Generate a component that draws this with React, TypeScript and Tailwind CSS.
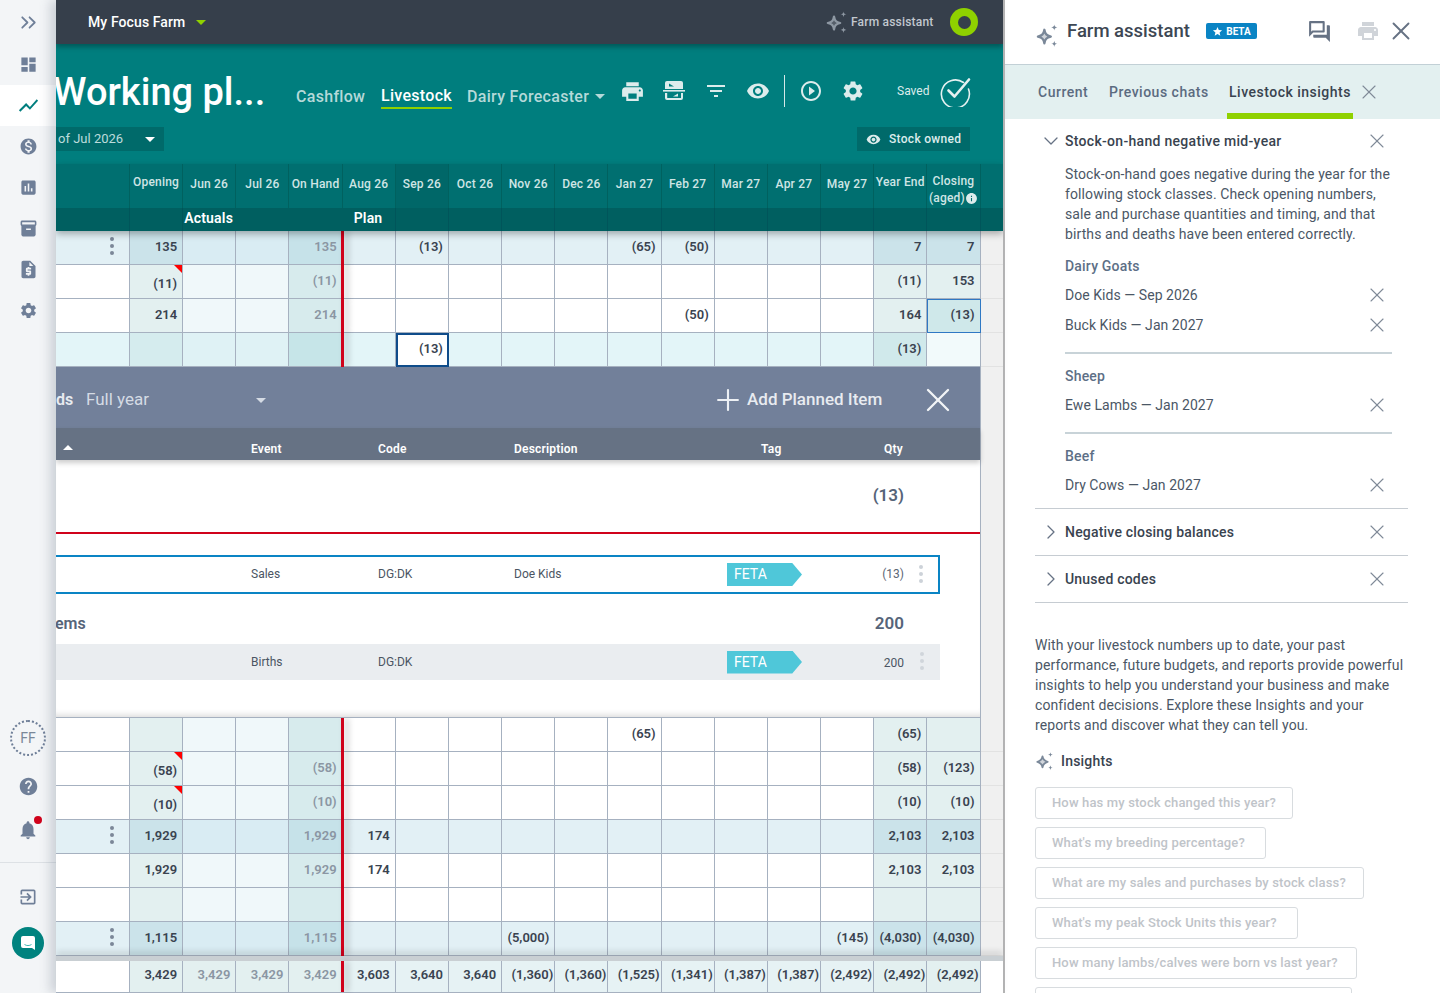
import { ReactNode } from 'react';
import { ChevronDown, ChevronRight, ChevronsRight, Plus, X } from 'lucide-react';
import {
  MdAssessment,
  MdDashboard,
  MdFilterList,
  MdHelp,
  MdInfo,
  MdInventory2,
  MdMonetizationOn,
  MdNotifications,
  MdOutlineExitToApp,
  MdOutlineQuestionAnswer,
  MdPlayCircleOutline,
  MdPrint,
  MdRequestQuote,
  MdSettings,
  MdShowChart,
  MdStar,
  MdVisibility,
} from 'react-icons/md';

type RowKind = 'plain' | 'total' | 'edit';

interface RowData {
  kind: RowKind;
  menu?: boolean;
  corner?: boolean;
  cells: Record<number, string>;
}

const gridCols = 'grid grid-cols-[74px_repeat(16,53.16px)]';

const months = ['Jun 26', 'Jul 26', 'On Hand', 'Aug 26', 'Sep 26', 'Oct 26', 'Nov 26', 'Dec 26', 'Jan 27', 'Feb 27', 'Mar 27', 'Apr 27', 'May 27'];

const topRows: RowData[] = [
  { kind: 'total', menu: true, cells: { 0: '135', 3: '135', 5: '(13)', 9: '(65)', 10: '(50)', 14: '7', 15: '7' } },
  { kind: 'plain', corner: true, cells: { 0: '(11)', 3: '(11)', 14: '(11)', 15: '153' } },
  { kind: 'plain', cells: { 0: '214', 3: '214', 10: '(50)', 14: '164', 15: '(13)' } },
  { kind: 'edit', cells: { 5: '(13)', 14: '(13)' } },
];

const bottomRows: RowData[] = [
  { kind: 'plain', cells: { 9: '(65)', 14: '(65)' } },
  { kind: 'plain', corner: true, cells: { 0: '(58)', 3: '(58)', 14: '(58)', 15: '(123)' } },
  { kind: 'plain', corner: true, cells: { 0: '(10)', 3: '(10)', 14: '(10)', 15: '(10)' } },
  { kind: 'total', menu: true, cells: { 0: '1,929', 3: '1,929', 4: '174', 14: '2,103', 15: '2,103' } },
  { kind: 'plain', cells: { 0: '1,929', 3: '1,929', 4: '174', 14: '2,103', 15: '2,103' } },
  { kind: 'plain', cells: {} },
  { kind: 'total', menu: true, cells: { 0: '1,115', 3: '1,115', 7: '(5,000)', 13: '(145)', 14: '(4,030)', 15: '(4,030)' } },
];

const footerValues = ['3,429', '3,429', '3,429', '3,429', '3,603', '3,640', '3,640', '(1,360)', '(1,360)', '(1,525)', '(1,341)', '(1,387)', '(1,387)', '(2,492)', '(2,492)', '(2,492)'];

const insightQuestions = [
  { text: 'How has my stock changed this year?', width: 'w-[258px]' },
  { text: "What's my breeding percentage?", width: 'w-[231px]' },
  { text: 'What are my sales and purchases by stock class?', width: 'w-[329px]' },
  { text: "What's my peak Stock Units this year?", width: 'w-[263px]' },
  { text: 'How many lambs/calves were born vs last year?', width: 'w-[322px]' },
];

const tints: Record<RowKind, string[]> = {
  plain: ['bg-[#e3f0f0]', 'bg-[#f0f8fa]', 'bg-[#d7ebed]', 'bg-white', 'bg-[#e3f0f0]'],
  total: ['bg-[#cbe3ea]', 'bg-[#d9ecf3]', 'bg-[#c6e2e9]', 'bg-[#e2f0f5]', 'bg-[#cbe3ea]'],
  edit: ['bg-[#d5ecee]', 'bg-[#dff2f5]', 'bg-[#c6e5e8]', 'bg-[#e3f5f8]', 'bg-[#d0e9eb]'],
};

function tintIndex(col: number) {
  if (col === 0) return 0;
  if (col < 3) return 1;
  if (col === 3) return 2;
  if (col < 14) return 3;
  return 4;
}

function Sparkle({ className }: { className: string }) {
  return (
    <svg viewBox="0 0 24 24" className={className} fill="none">
      <path d="M9 6.5C9.7 10.6 11 12 15.2 13C11 14 9.7 15.4 9 19.5C8.3 15.4 7 14 2.8 13C7 12 8.3 10.6 9 6.5Z" fill="currentColor" fillOpacity="0.35" stroke="currentColor" strokeWidth="2.2" strokeLinejoin="round" />
      <path d="M18.5 1.5C18.8 3.4 19.3 3.9 21.5 4.3C19.3 4.7 18.8 5.2 18.5 7.2C18.2 5.2 17.7 4.7 15.5 4.3C17.7 3.9 18.2 3.4 18.5 1.5Z" fill="currentColor" />
      <path d="M18.5 17C18.8 19 19.3 19.5 21.5 19.9C19.3 20.3 18.8 20.8 18.5 23C18.2 20.8 17.7 20.3 15.5 19.9C17.7 19.5 18.2 19 18.5 17Z" fill="currentColor" />
    </svg>
  );
}

function Caret({ className }: { className: string }) {
  return <span className={`inline-block h-0 w-0 border-x-[5px] border-t-[5px] border-x-transparent ${className}`} />;
}

function Kebab({ className = 'bg-[#7b8798]' }: { className?: string }) {
  return (
    <span className="flex flex-col gap-[3px]">
      <span className={`h-[4px] w-[4px] rounded-full ${className}`} />
      <span className={`h-[4px] w-[4px] rounded-full ${className}`} />
      <span className={`h-[4px] w-[4px] rounded-full ${className}`} />
    </span>
  );
}

function SideItem({ children, active }: { children: ReactNode; active?: boolean }) {
  return <div className={`flex h-[41px] items-center justify-center text-[#6f7f98] ${active ? 'bg-white' : ''}`}>{children}</div>;
}

function Sidebar() {
  return (
    <aside className="flex h-full w-[56px] shrink-0 flex-col bg-[#f3f5f7]">
      <div className="flex h-[44px] items-center justify-center text-[#6f7f98]">
        <ChevronsRight size={25} strokeWidth={1.7} />
      </div>
      <SideItem><MdDashboard size={19} /></SideItem>
      <SideItem active><MdShowChart size={23} className="text-[#007e7e]" /></SideItem>
      <SideItem><MdMonetizationOn size={19} /></SideItem>
      <SideItem><MdAssessment size={19} /></SideItem>
      <SideItem><MdInventory2 size={19} /></SideItem>
      <SideItem><MdRequestQuote size={21} /></SideItem>
      <SideItem><MdSettings size={19} /></SideItem>
      <div className="mt-auto flex flex-col items-center pb-[34px]">
        <div className="flex h-[36px] w-[36px] items-center justify-center rounded-full border-2 border-dotted border-[#6f7f98] text-[14px] text-[#7a8899]">FF</div>
        <MdHelp size={21} className="mt-[20px] text-[#6f7f98]" />
        <div className="relative mt-[22px] text-[#6f7f98]">
          <MdNotifications size={22} />
          <span className="absolute right-[-3px] top-[-3px] h-[8px] w-[8px] rounded-full bg-[#d0021b]" />
        </div>
        <div className="mt-[21px] h-px w-[56px] bg-[#dde1e5]" />
        <MdOutlineExitToApp size={20} className="mt-[24px] text-[#6f7f98]" />
        <div className="mt-[20px] flex h-[32px] w-[32px] items-center justify-center rounded-full bg-[#00837f]">
          <svg viewBox="0 0 16 16" className="h-[16px] w-[16px]">
            <path d="M3 1h10a2 2 0 0 1 2 2v12l-3-2H3a2 2 0 0 1-2-2V3a2 2 0 0 1 2-2z" fill="#fff" />
            <path d="M4.5 9.5c2 1.4 5 1.4 7 0" stroke="#3fb8b4" strokeWidth="1" fill="none" />
          </svg>
        </div>
      </div>
    </aside>
  );
}

function ToolIcon({ children }: { children: ReactNode }) {
  return <div className="flex w-[42px] items-center justify-center text-[#dcecec]">{children}</div>;
}

function TopHeader() {
  return (
    <>
      <div className="relative z-20 flex h-[44px] shrink-0 items-center bg-[#363f4b] shadow-[0_3px_5px_rgba(0,0,0,0.3)]">
        <span className="ml-[32px] w-[108px] text-[14px] font-medium tracking-[0.1px] text-white">My Focus Farm</span>
        <Caret className="border-t-[#8fd100]" />
        <Sparkle className="ml-auto h-[24px] w-[24px] text-[#8e98a3]" />
        <span className="ml-[2px] w-[83px] whitespace-nowrap text-[12px] font-medium tracking-[0.2px] text-[#c2c8cf]">Farm assistant</span>
        <div className="ml-[16px] mr-[25px] flex h-[28px] w-[28px] items-center justify-center rounded-full bg-[#8fd100]">
          <span className="h-[13px] w-[13px] rounded-full bg-[#363f4b]" />
        </div>
      </div>
      <div className="flex h-[120px] shrink-0 flex-col bg-[#007e7e]">
        <div className="mt-[19px] flex h-[56px] items-center">
          <div className="w-[240px] shrink-0 overflow-hidden">
            <div className="-ml-[3px] mt-[2px] whitespace-nowrap text-[38px] font-medium leading-[48px] text-white">Working pl...</div>
          </div>
          <span className="w-[85px] pt-[11px] text-[16px] font-medium tracking-[0.3px] text-[#b5d9d9]">Cashflow</span>
          <span className="mt-[11px] w-[86px]">
            <span className="inline-block border-b-2 border-[#8fd100] text-[16px] font-medium leading-[22px] tracking-[0.3px] text-white">Livestock</span>
          </span>
          <span className="w-[128px] whitespace-nowrap pt-[11px] text-[16px] font-medium tracking-[0.3px] text-[#b5d9d9]">Dairy Forecaster</span>
          <Caret className="mt-[10px] border-t-[#b5d9d9]" />
          <div className="ml-[6px] flex items-center">
            <ToolIcon><MdPrint size={25} /></ToolIcon>
            <ToolIcon>
              <svg viewBox="0 0 24 24" className="h-[24px] w-[24px]" fill="currentColor">
                <path d="M5 2h14a2 2 0 0 1 2 2v6H3V4a2 2 0 0 1 2-2z" />
                <path d="M7 4.5l5 3-5 0z" fill="#007e7e" />
                <rect x="1" y="11" width="22" height="1.6" />
                <path d="M3 14h2.2v5H19v-5h2v5a2 2 0 0 1-2 2H5a2 2 0 0 1-2-2z" />
                <path d="M16 14.5l-5 3 5 0z" />
              </svg>
            </ToolIcon>
            <ToolIcon><MdFilterList size={24} /></ToolIcon>
            <ToolIcon><MdVisibility size={24} /></ToolIcon>
            <div className="ml-[5px] h-[32px] w-px bg-[#d5e8e8]" />
            <div className="ml-[5px] flex items-center">
              <ToolIcon><MdPlayCircleOutline size={24} /></ToolIcon>
              <ToolIcon><MdSettings size={24} /></ToolIcon>
            </div>
          </div>
          <span className="ml-[23px] w-[42px] text-[12px] text-[#dcecec]">Saved</span>
          <svg viewBox="0 0 32 32" className="h-[32px] w-[32px]" fill="none" stroke="#e5f1f1" strokeLinecap="round" strokeLinejoin="round">
            <path d="M24.5 7.5A14 14 0 1 0 29.5 14" strokeWidth="1.6" />
            <path d="M9.5 15.5l6 6L30 4.5" strokeWidth="2.6" />
          </svg>
        </div>
        <div className="mt-[8px] flex h-[24px] items-center">
          <div className="flex h-full w-[108px] items-center bg-[#006a6a] pl-[2px] text-[13px] text-[#bcdcdc]">
            <span>of Jul 2026</span>
            <Caret className="ml-auto mr-[9px] border-t-white" />
          </div>
          <div className="ml-[693px] flex h-full w-[113px] items-center bg-[#006a6a] pl-[9px] text-[12px] font-medium text-[#dcecec]">
            <MdVisibility size={15} />
            <span className="ml-[8px] tracking-[0.3px]">Stock owned</span>
          </div>
        </div>
      </div>
    </>
  );
}

function TableHead() {
  return (
    <div className="relative z-10 h-[67px] shrink-0 bg-[#006f70] shadow-[0_3px_7px_rgba(0,0,0,0.3)]">
      <div className={`${gridCols} h-[44px] text-[12px] font-medium tracking-[0.2px] text-[#cfe5e5]`}>
        <div className="border-r border-[#00615f]" />
        <div className="border-r border-[#00615f] pt-[9px] text-center leading-[18px]">Opening</div>
        {months.map((m) => (
          <div key={m} className={`flex justify-center whitespace-nowrap border-r border-[#00615f] pt-[12px] leading-[16px] ${m === 'Sep 26' ? 'bg-[#006768]' : ''}`}>
            {m}
          </div>
        ))}
        <div className="whitespace-nowrap border-r border-[#00615f] pt-[9px] text-center leading-[18px]">Year End</div>
        <div className="flex flex-col items-center border-r border-[#00615f] pt-[9px] leading-[17px]">
          <span>Closing</span>
          <span className="flex items-center">(aged)<MdInfo size={13} className="text-[#dcecec]" /></span>
        </div>
      </div>
      <div className={`${gridCols} h-[23px] bg-[#005f60] text-[14px] font-semibold leading-[20px] tracking-[0.2px] text-white`}>
        <div className="border-r border-[#00555a]" />
        <div className="border-r border-[#00555a]" />
        <div className="col-span-3 pl-[1px] text-left">Actuals</div>
        <div className="border-r border-[#00555a] pl-[11px]">Plan</div>
        {Array.from({ length: 11 }).map((_, i) => (
          <div key={i} className="border-r border-[#00555a]" />
        ))}
      </div>
    </div>
  );
}

function DataCell({ col, row, rowIndex, top }: { col: number; row: RowData; rowIndex: number; top: boolean }) {
  const value = row.cells[col];
  const muted = col === 3;
  let bg = tints[row.kind][tintIndex(col)];
  let extra = '';
  // selected cells only exist in the upper block
  if (top && rowIndex === 3 && col === 5) {
    bg = 'bg-white';
    extra = 'outline-2 -outline-offset-2 outline-[#0f4c8a]';
  }
  if (top && rowIndex === 3 && col === 15) bg = 'bg-[#f2fafb]';
  if (top && rowIndex === 2 && col === 15) {
    bg = 'bg-[#cfe8ea]';
    extra = 'outline-1 -outline-offset-1 outline-[#2f78c4]';
  }
  const isOpeningCorner = row.corner && col === 0;
  return (
    <div
      className={`relative flex items-center justify-end whitespace-nowrap border-b border-r border-[#a6b1c0] pr-[5px] text-[13px] font-semibold ${bg} ${extra} ${
        muted ? 'text-[#8b96a3]' : 'text-[#3a4350]'
      } ${isOpeningCorner ? 'pt-[5px]' : 'pb-[2px]'}`}
    >
      {isOpeningCorner && <span className="absolute right-0 top-0 h-0 w-0 border-l-[8px] border-t-[8px] border-l-transparent border-t-[#f00]" />}
      {col === 3 && <span className="absolute bottom-[-1px] right-[-2px] top-0 z-[1] w-[3px] bg-[#d0021b] shadow-[4px_0_6px_rgba(0,0,0,0.25)]" />}
      {value}
    </div>
  );
}

function TableRows({ rows, top }: { rows: RowData[]; top: boolean }) {
  return (
    <>
      {rows.map((row, r) => (
        <div key={r} className="flex h-[34px] shrink-0 bg-[#f0f0f0]">
          <div className={`${gridCols} w-[924.5px]`}>
            <div className={`flex items-center justify-end border-b border-r border-[#a6b1c0] pb-[3px] pr-[15px] ${tints[row.kind][3]}`}>
              {row.menu && <Kebab />}
            </div>
            {Array.from({ length: 16 }).map((_, c) => (
              <DataCell key={c} col={c} row={row} rowIndex={r} top={top} />
            ))}
          </div>
          <div className="flex-1 border-b border-[#e2e2e2]" />
        </div>
      ))}
    </>
  );
}

function FetaTag() {
  return (
    <span className="flex h-[23px] w-[75px] items-center bg-[#4fc7d9] pl-[7px] text-[14px] text-white [clip-path:polygon(0_0,87%_0,100%_50%,87%_100%,0_100%)]">
      FETA
    </span>
  );
}

function PlannedItems() {
  const itemCols = 'grid grid-cols-[195px_127px_136px_213px_102px]';
  return (
    <div className="flex h-[351px] shrink-0 bg-[#f0f0f0]">
      <div className="relative z-[2] flex h-full w-[925px] flex-col border-b border-r border-[#a6b1c0] bg-white shadow-[inset_0_-7px_6px_-5px_rgba(0,0,0,0.15)]">
        <div className="flex h-[61px] shrink-0 items-center overflow-hidden bg-[#72809a] pt-[5px]">
          <span className="w-[30px] shrink-0 text-[16px] font-semibold text-[#e8ebf0]">ds</span>
          <span className="text-[17px] text-[#d5dbe4]">Full year</span>
          <Caret className="ml-[107px] border-t-[#d5dbe4]" />
          <Plus size={34} strokeWidth={1.5} className="ml-[445px] text-[#edf0f4]" />
          <span className="ml-[2px] w-[171px] whitespace-nowrap text-[17px] font-medium text-[#e8ebf0]">Add Planned Item</span>
          <X size={40} strokeWidth={1.4} className="text-[#f2f4f7]" />
        </div>
        <div className="relative z-[1] h-[32px] shrink-0 bg-[#667284] text-[12px] font-semibold tracking-[0.2px] text-white shadow-[0_3px_5px_rgba(0,0,0,0.2)]">
          <div className={`${itemCols} h-full items-end pb-[2px]`}>
            <span className="relative pl-[7px]"><Caret className="mb-[3px] rotate-180 border-t-white" /></span>
            <span>Event</span>
            <span>Code</span>
            <span>Description</span>
            <span className="flex"><span className="pl-[34px]">Tag</span></span>
          </div>
          <span className="absolute bottom-[2px] left-[828px]">Qty</span>
        </div>
        <div className="flex h-[72px] shrink-0 items-center justify-end pr-[76px] text-[17px] font-semibold text-[#566479]">(13)</div>
        <div className="h-[2px] shrink-0 bg-[#d0021b]" />
        <div className="mt-[21px] h-[39px] w-[884px] shrink-0 border-y-2 border-r-2 border-[#0a84c4]">
          <div className="relative h-full text-[12px] text-[#4b5563]">
            <div className={`${itemCols} h-full items-center`}>
              <span />
              <span className="pb-[1px]">Sales</span>
              <span className="pb-[1px]">DG:DK</span>
              <span className="pb-[1px]">Doe Kids</span>
              <FetaTag />
            </div>
            <span className="absolute right-[34px] top-[8px] text-[#5b6675]">(13)</span>
            <span className="absolute right-[15px] top-[8px]"><Kebab className="bg-[#cdd2d9]" /></span>
          </div>
        </div>
        <div className="flex h-[50px] shrink-0 items-center justify-between pr-[76px] pt-[9px] text-[16px] font-semibold text-[#566479]">
          <span className="-ml-[1px]">ems</span>
          <span className="text-[17px]">200</span>
        </div>
        <div className="relative h-[36px] w-[884px] shrink-0 bg-[#eaedf0] text-[12px] text-[#4b5563]">
          <div className={`${itemCols} h-full items-center`}>
            <span />
            <span>Births</span>
            <span>DG:DK</span>
            <span />
            <FetaTag />
          </div>
          <span className="absolute right-[36px] top-[10px]">200</span>
          <span className="absolute right-[16px] top-[8px]"><Kebab className="bg-[#d0d5db]" /></span>
        </div>
      </div>
      <div className="flex-1" />
    </div>
  );
}

function TableFooter() {
  return (
    <div className="relative z-[3] flex h-[32px] shrink-0 bg-white">
      <div className={`${gridCols} w-[924.5px] border-b border-[#a6b1c0]`}>
        <div className="border-r border-[#a6b1c0] bg-white" />
        {footerValues.map((v, i) => (
          <div
            key={i}
            className={`relative flex items-center justify-end whitespace-nowrap border-r border-[#a6b1c0] pb-[3px] pr-[1px] text-[13px] font-semibold ${
              i > 3 && i < 14 ? 'bg-[#e6f2f4]' : 'bg-[#e3f0f0]'
            } ${i > 0 && i < 4 ? 'pr-[5px] text-[#8b96a3]' : 'text-[#3a4350]'} ${i === 0 || (i >= 4 && i <= 6) ? 'pr-[5px]' : ''}`}
          >
            {i === 3 && <span className="absolute bottom-0 right-[-2px] top-0 z-[1] w-[3px] bg-[#d0021b] shadow-[4px_0_6px_rgba(0,0,0,0.25)]" />}
            {v}
          </div>
        ))}
      </div>
    </div>
  );
}

function CloseX({ className = 'text-[#7f8a98]' }: { className?: string }) {
  return <X size={24} strokeWidth={1.1} className={className} />;
}

function InsightItem({ label }: { label: string }) {
  return (
    <div className="flex h-[30px] items-center justify-between pr-[19px] text-[14px] tracking-[0.05px] text-[#4b5766]">
      <span>{label}</span>
      <CloseX />
    </div>
  );
}

function CollapsedSection({ label }: { label: string }) {
  return (
    <div className="flex h-[47px] items-center border-b border-[#c6ccd2] pl-[4px] pr-[19px]">
      <ChevronRight size={24} strokeWidth={1.3} className="text-[#667284]" />
      <span className="ml-[2px] text-[14px] font-medium tracking-[0.2px] text-[#39434f]">{label}</span>
      <span className="ml-auto"><CloseX /></span>
    </div>
  );
}

function AssistantPanel() {
  return (
    <aside className="h-full w-[437px] shrink-0 overflow-hidden border-l-2 border-[#b5b5b5] bg-white">
      <div className="flex h-[65px] items-center border-b border-[#c2d0d6] pl-[30px]">
        <Sparkle className="mt-[6px] h-[25px] w-[25px] text-[#7a8899]" />
        <span className="ml-[7px] mt-[-1px] w-[139px] whitespace-nowrap text-[18.5px] font-medium text-[#3d4753]">Farm assistant</span>
        <span className="mt-[-2px] flex h-[16px] w-[51px] items-center justify-center gap-[3px] rounded-[2px] bg-[#0a84c4] text-[10px] font-bold text-white">
          <MdStar size={11} />
          BETA
        </span>
        <MdOutlineQuestionAnswer size={25} className="ml-[50px] mt-[-2px] text-[#667284]" />
        <MdPrint size={24} className="ml-[24px] mt-[-2px] text-[#d0d4d9]" />
        <X size={30} strokeWidth={1.5} className="ml-[6px] mt-[-2px] text-[#667284]" />
      </div>
      <div className="flex h-[54px] items-end bg-[#e3f0f0] pl-[33px] text-[14px] font-medium tracking-[0.5px]">
        <span className="flex h-full w-[71px] items-center text-[#5b6b80]">Current</span>
        <span className="flex h-full w-[118px] items-center whitespace-nowrap text-[#5b6b80]">Previous chats</span>
        <span className="flex h-full w-[126px] items-center whitespace-nowrap border-b-[6px] border-[#8fd100] pl-[2px] pt-[6px] text-[#39434f]">Livestock insights</span>
        <span className="ml-[4px] flex h-full items-center"><X size={24} strokeWidth={1.1} className="text-[#7f8a98]" /></span>
      </div>
      <div className="ml-[30px] w-[373px]">
        <div className="border-b border-[#c6ccd2] pb-[8px]">
          <div className="flex h-[44px] items-center pl-[4px] pr-[19px]">
            <ChevronDown size={24} strokeWidth={1.3} className="text-[#667284]" />
            <span className="ml-[2px] text-[14px] font-medium tracking-[0.3px] text-[#39434f]">Stock-on-hand negative mid-year</span>
            <span className="ml-auto"><CloseX /></span>
          </div>
          <div className="mt-[1px] pl-[30px]">
            <p className="w-[335px] text-[14px] leading-[20px] tracking-[0.1px] text-[#4b5766]">
              Stock-on-hand goes negative during the year for the following stock classes. Check opening numbers, sale and purchase quantities and timing, and that births and deaths have been entered correctly.
            </p>
            <div className="mt-[12px] text-[14px] font-medium leading-[20px] tracking-[0.2px] text-[#5d6f86]">Dairy Goats</div>
            <div className="mt-[4px]">
              <InsightItem label="Doe Kids — Sep 2026" />
              <InsightItem label="Buck Kids — Jan 2027" />
            </div>
            <div className="mr-[16px] mt-[12px] h-[2px] bg-[#c8d3d8]" />
            <div className="mt-[12px] text-[14px] font-medium leading-[20px] tracking-[0.2px] text-[#5d6f86]">Sheep</div>
            <div className="mt-[4px]"><InsightItem label="Ewe Lambs — Jan 2027" /></div>
            <div className="mr-[16px] mt-[12px] h-[2px] bg-[#c8d3d8]" />
            <div className="mt-[12px] text-[14px] font-medium leading-[20px] tracking-[0.2px] text-[#5d6f86]">Beef</div>
            <div className="mt-[4px]"><InsightItem label="Dry Cows — Jan 2027" /></div>
          </div>
        </div>
        <CollapsedSection label="Negative closing balances" />
        <CollapsedSection label="Unused codes" />
        <p className="mt-[32px] text-[14px] leading-[20px] tracking-[0.1px] text-[#4b5766]">
          With your livestock numbers up to date, your past performance, future budgets, and reports provide powerful insights to help you understand your business and make confident decisions. Explore these Insights and your reports and discover what they can tell you.
        </p>
        <div className="mt-[16px] flex h-[20px] items-center">
          <Sparkle className="h-[20px] w-[20px] text-[#7a8899]" />
          <span className="ml-[6px] text-[14px] font-medium tracking-[0.2px] text-[#39434f]">Insights</span>
        </div>
        <div className="mt-[16px] flex flex-col gap-[8px]">
          {insightQuestions.map((q) => (
            <div key={q.text} className={`flex h-[32px] items-center whitespace-nowrap rounded-[3px] border border-[#d8dcdf] pl-[16px] text-[13px] font-medium tracking-[0.15px] text-[#bfc4c9] ${q.width}`}>
              {q.text}
            </div>
          ))}
          <div className="h-[32px] w-[317px] rounded-[3px] border border-[#d8dcdf]" />
        </div>
      </div>
    </aside>
  );
}

export default function App() {
  return (
    <div className="flex h-[993px] w-[1440px] overflow-hidden bg-white font-['Roboto',sans-serif]">
      <Sidebar />
      <main className="relative flex h-full w-[947px] shrink-0 flex-col overflow-hidden shadow-[-6px_0_10px_rgba(90,105,125,0.25)]">
        <TopHeader />
        <TableHead />
        <TableRows rows={topRows} top />
        <PlannedItems />
        <TableRows rows={bottomRows} top={false} />
        <div className="relative z-[2] flex h-[5px] shrink-0 bg-[#c9cfd3] shadow-[0_-4px_6px_rgba(0,0,0,0.15)]" />
        <TableFooter />
      </main>
      <AssistantPanel />
    </div>
  );
}
